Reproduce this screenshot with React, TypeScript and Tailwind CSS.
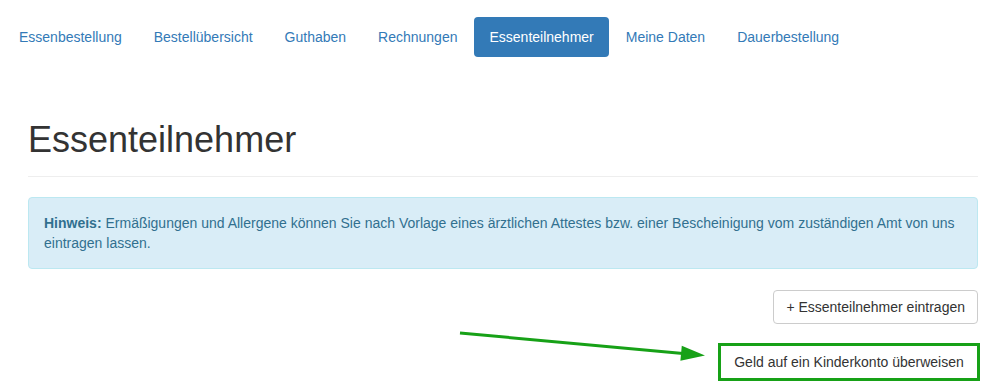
const navItems = [
  "Essenbestellung",
  "Bestellübersicht",
  "Guthaben",
  "Rechnungen",
  "Essenteilnehmer",
  "Meine Daten",
  "Dauerbestellung",
];

export default function App() {
  return (
    <div className="relative w-[985px] h-[388px] overflow-hidden bg-white font-['Liberation_Sans',Arial,sans-serif] text-[14px] leading-[20px] text-[#333]">
      {/* top navigation pills */}
      <ul className="flex gap-[2px] pl-[4px] pt-[17px]">
        {navItems.map((item) => (
          <li key={item}>
            <a
              href="#"
              className={
                item === "Essenteilnehmer"
                  ? "block px-[15px] py-[10px] rounded-[4px] bg-[#337ab7] text-white"
                  : "block px-[15px] py-[10px] rounded-[4px] text-[#337ab7]"
              }
            >
              {item}
            </a>
          </li>
        ))}
      </ul>

      <div className="pl-[28px] pr-[7px]">
        <div className="mt-[63px] pb-[16px] border-b border-[#eee]">
          <h1 className="text-[36px] leading-[40px] font-normal text-[#333]">Essenteilnehmer</h1>
        </div>

        <div className="mt-[20px] px-[15px] py-[15px] rounded-[4px] border border-[#bce8f1] bg-[#d9edf7] text-[#31708f]">
          <p>
            <strong className="font-bold">Hinweis:</strong>{" "}
            <span>
              Ermäßigungen und Allergene können Sie nach Vorlage eines ärztlichen Attestes bzw. einer Bescheinigung vom
              zuständigen Amt von uns eintragen lassen.
            </span>
          </p>
        </div>

        <div className="mt-[21px] flex flex-col items-end gap-[19px]">
          <button className="px-[12px] py-[6px] rounded-[4px] border border-[#ccc] bg-white text-[#333]">
            + Essenteilnehmer eintragen
          </button>
          <button className="-mr-[2px] w-[262px] py-[6px] border-[3px] border-[#17a117] bg-white text-[#333] text-center">
            Geld auf ein Kinderkonto überweisen
          </button>
        </div>
      </div>

      {/* annotation arrow */}
      <svg className="absolute left-0 top-0 pointer-events-none" width="985" height="388" viewBox="0 0 985 388">
        <line x1="460" y1="333" x2="683" y2="353.4" stroke="#17a117" strokeWidth="3" />
        <polygon points="705,355.4 680.4,360.7 681.8,345.7" fill="#17a117" />
      </svg>
    </div>
  );
}
